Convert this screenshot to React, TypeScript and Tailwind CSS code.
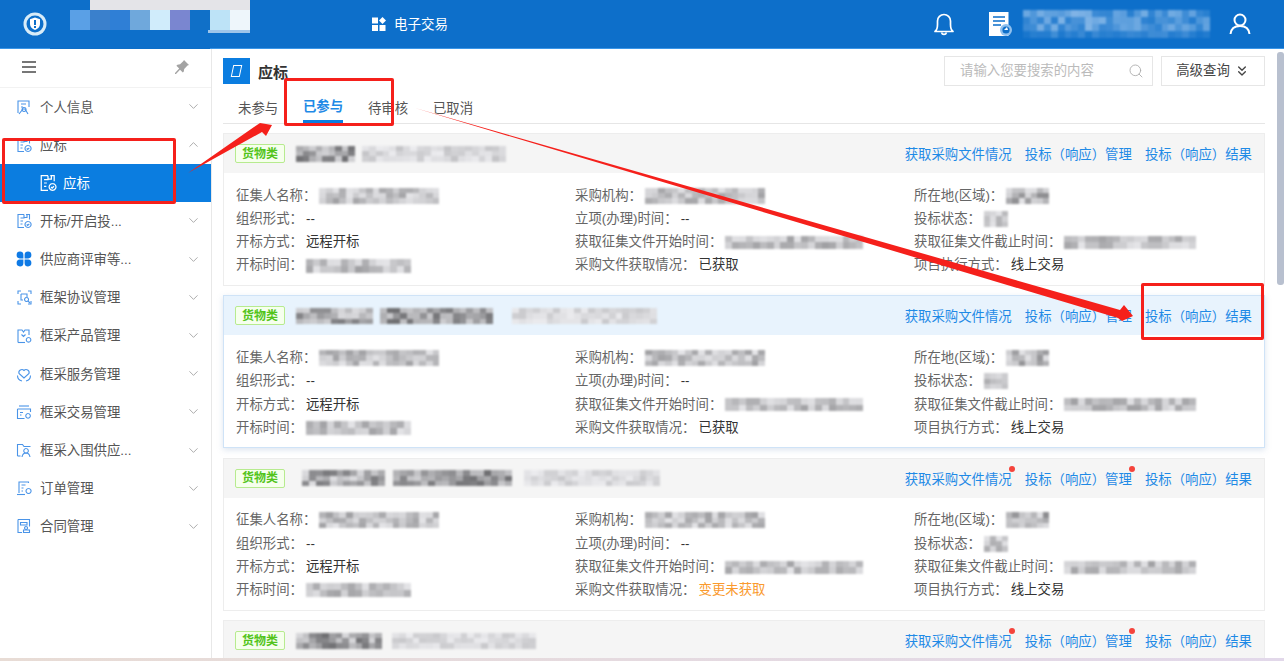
import { ChevronDown, ChevronUp, ChevronsDown, Search } from 'lucide-react';

const FONT = "font-['Liberation_Sans','Noto_Sans_CJK_SC',sans-serif]";

// stand-in for the pixelated, censored bits of the screenshot
const Mosaic = ({ w, h = 16, seed = 1, dark = 160, light = 228, cell = 7 }: { w: number; h?: number; seed?: number; dark?: number; light?: number; cell?: number }) => {
  const cols = Math.ceil(w / cell);
  const rows = Math.ceil(h / cell);
  const cells = [];
  for (let i = 0; i < cols * rows; i++) {
    const r = Math.abs(Math.sin((i + 1) * 12.9898 + seed * 78.233) * 43758.5453) % 1;
    const v = Math.round(light - (light - dark) * r);
    cells.push(<div key={i} style={{ backgroundColor: `rgb(${v},${v},${v + 3})` }} />);
  }
  return (
    <div
      className="grid shrink-0 overflow-hidden blur-[1px]"
      style={{ width: w, height: h, gridTemplateColumns: `repeat(${cols}, 1fr)`, gridTemplateRows: `repeat(${rows}, 1fr)` }}
    >
      {cells}
    </div>
  );
};

const HeaderMosaic = () => {
  const cols = 27;
  const cells = [];
  for (let i = 0; i < cols * 4; i++) {
    const r = Math.abs(Math.sin((i + 3) * 9.13) * 9999.77) % 1;
    const fade = i >= cols * 3 ? 0.45 : 1;
    cells.push(<div key={i} style={{ backgroundColor: `rgba(170,205,240,${(0.15 + r * 0.6) * fade})` }} />);
  }
  return (
    <div className="grid h-[28px] w-[187px] blur-[0.8px]" style={{ gridTemplateColumns: `repeat(${cols}, 1fr)`, gridTemplateRows: 'repeat(4, 1fr)' }}>
      {cells}
    </div>
  );
};

const iconPaths: Record<string, string[]> = {
  person: ['M2 14V2h11v6', 'M5 5h5M5 8h2', 'M3 15l4-5 2-0 3 5', 'M8 8.5a2 2 0 1 0 .1 0'],
  doc: ['M8 1.5H2v13h6', 'M10 1.5h3.5v5', 'M4.5 5h4M4.5 8h2.5M4.5 11h2', 'M8 1.5v3h3v-3', 'M12 8.5a3 3 0 1 0 .1 0', 'M10.7 11.5l1 1 1.6-1.6'],
  frame: ['M2 5V2h3M12 2h3v3M15 12v3h-3M5 15H2v-3', 'M5 5h6v3', 'M5 5v6h2', 'M10.5 8.5a2 2 0 1 0 .1 0', 'M12 12l2 2'],
  product: ['M2 14.5V2h4l1.5 2L9 2h4v5', 'M2 14.5h7', 'M5.5 6.5l2 2 2-2', 'M12.5 9.5a2.3 2.3 0 1 0 .1 0'],
  heart: ['M8 12L3 7.5a3 3 0 0 1 5-3 3 3 0 0 1 5 3z', 'M1.5 9.5c0 3 2 5 4.5 5.5', 'M14.5 9.5c0 3-2 5-4.5 5.5'],
  trade: ['M3 2h10', 'M1.5 5h13v3', 'M1.5 5v9.5h7', 'M4 8.5h3M4 11h1.5', 'M12 9.5a2.3 2.3 0 1 0 .1 0'],
  folder: ['M1.5 14V2.5h5l1.5 2h6.5', 'M1.5 14h3', 'M10 6.5a2.3 2.3 0 1 0 .1 0', 'M6 15c.5-3 2-4 4-4s3.500 1 4 4'],
  order: ['M3 13V2h9.500v1', 'M1 14.500h8', 'M5.500 5h4M5.500 8h2M5.500 11h1.500', 'M12.500 8.500a2.500 2.500 0 1 0 .1 0'],
  contract: ['M2 1.500h11.500v7', 'M2 1.500v13h4', 'M4.500 4.500h6.500v2.500h-6.500z', 'M10 8.500a1.500 1.500 0 1 0 .1 0', 'M7.500 14.500v-2.500h6v2.500z'],
};

const NavIcon = ({ name, size = 16, color = '#4a94e8' }: { name: string; size?: number; color?: string }) => {
  if (name === 'clover') {
    return (
      <svg width={size} height={size} viewBox="0 0 16 16" fill="#0f7ae5" className="shrink-0">
        <path d="M7.400 7.400H3.800a3.400 3.400 0 1 1 3.600-3.600zM8.600 7.400V3.800a3.400 3.400 0 1 1 3.600 3.600zM7.400 8.600v3.600a3.400 3.400 0 1 1-3.600-3.600zM8.600 8.600h3.600a3.400 3.400 0 1 1-3.600 3.600z" />
      </svg>
    );
  }
  return (
    <svg width={size} height={size} viewBox="0 0 16 16" fill="none" stroke={color} strokeWidth="1.100" className="shrink-0">
      {iconPaths[name].map((d) => (
        <path key={d} d={d} />
      ))}
    </svg>
  );
};

const navItems = [
  { icon: 'person', label: '个人信息' },
  { icon: 'doc', label: '应标', open: true },
  { icon: 'doc', label: '开标/开启投...' },
  { icon: 'clover', label: '供应商评审等...' },
  { icon: 'frame', label: '框架协议管理' },
  { icon: 'product', label: '框采产品管理' },
  { icon: 'heart', label: '框采服务管理' },
  { icon: 'trade', label: '框采交易管理' },
  { icon: 'folder', label: '框采入围供应...' },
  { icon: 'order', label: '订单管理' },
  { icon: 'contract', label: '合同管理' },
];

const Sidebar = () => (
  <aside className="w-[212px] shrink-0 border-r border-[#e8e8e8] bg-white text-[13.4px] text-[#555]">
    <div className="flex h-[38.500px] items-center justify-between border-b border-[#f2f2f2] pb-[1px] pl-[22px] pr-[21px]">
      <svg width="14" height="12" viewBox="0 0 14 12" fill="#777">
        <rect y="0" width="14" height="2" />
        <rect y="5" width="14" height="2" />
        <rect y="10" width="14" height="2" />
      </svg>
      <svg width="16" height="16" viewBox="0 0 16 16" fill="#a3a3a3">
        <path d="M10 1l5 5-1.500.6-3.300 3.300-.4 2.700-1 1-2.800-2.800L2 15l-1 0 0-1 4.200-4.500L2.400 6.700l1-1 2.700-.4 3.300-3.300z" />
      </svg>
    </div>
    {navItems.map((item) => (
      <div key={item.label}>
        <div className="flex h-[38.200px] items-center pl-[16px] pr-[10px]">
          <NavIcon name={item.icon} />
          <span className="ml-[8px] flex-1 pt-[2px]">{item.label}</span>
          {item.open ? <ChevronUp size={15} color="#999" strokeWidth={1.300} /> : <ChevronDown size={15} color="#999" strokeWidth={1.300} />}
        </div>
        {item.open && (
          <div className="flex h-[38px] items-center bg-[#0b7de0] pl-[39px] text-white">
            <NavIcon name="doc" size={18} color="#fff" />
            <span className="ml-[6px] pt-[2px]">应标</span>
          </div>
        )}
      </div>
    ))}
  </aside>
);

type CardData = {
  title: { w: number; seed: number; dark: number; light: number; gap: number }[];
  status?: string;
  dots?: boolean;
  hot?: boolean;
  headOnly?: boolean;
};

const cards: CardData[] = [
  { title: [{ w: 59, seed: 3, dark: 110, light: 215, gap: 11 }, { w: 144, seed: 4, dark: 195, light: 235, gap: 7 }] },
  {
    hot: true,
    title: [
      { w: 77, seed: 5, dark: 125, light: 220, gap: 11 },
      { w: 113, seed: 6, dark: 110, light: 205, gap: 7 },
      { w: 145, seed: 7, dark: 200, light: 235, gap: 19 },
    ],
  },
  {
    dots: true,
    status: '变更未获取',
    title: [
      { w: 83, seed: 8, dark: 120, light: 220, gap: 17 },
      { w: 119, seed: 9, dark: 110, light: 205, gap: 8 },
      { w: 136, seed: 10, dark: 200, light: 235, gap: 12 },
    ],
  },
  {
    dots: true,
    headOnly: true,
    title: [{ w: 86, seed: 11, dark: 110, light: 215, gap: 11 }, { w: 144, seed: 12, dark: 200, light: 235, gap: 10 }],
  },
];

const Row = ({ label, children }: { label: string; children: React.ReactNode }) => (
  <div className="flex h-[23.300px] items-center text-[#666]">
    <span className="shrink-0">{label}</span>
    <div className="ml-[3px] flex items-center text-[#333]">{children}</div>
  </div>
);

const Link = ({ text, dot }: { text: string; dot?: boolean }) => (
  <span className="relative text-[#1f8ae6]">
    {text}
    {dot && <i className="absolute right-[-3px] top-[-4px] h-[6px] w-[6px] rounded-full bg-[#f5443c]" />}
  </span>
);

const Card = ({ data, seed }: { data: CardData; seed: number }) => (
  <div className={`mb-[9.400px] h-[153px] shrink-0 border bg-white ${data.hot ? 'border-[#cfe3f7] shadow-[0_2px_6px_rgba(120,150,190,0.25)]' : 'border-[#ededed]'}`}>
    <div className={`flex h-[39px] items-center pl-[11px] pr-[12px] ${data.hot ? 'bg-[#e8f3fd]' : 'bg-[#f5f5f5]'}`}>
      <span className="flex h-[19px] w-[50px] items-center justify-center rounded-[2px] border border-[#b7eb8f] bg-[#f6ffed] text-[12px] font-bold text-[#52c41a]">货物类</span>
      {data.title.map((t) => (
        <div key={t.seed} style={{ marginLeft: t.gap }}>
          <Mosaic w={t.w} h={16} seed={t.seed} dark={t.dark} light={t.light} />
        </div>
      ))}
      <div className="ml-auto flex gap-[13px] pt-[3px]">
        <Link text="获取采购文件情况" dot={data.dots} />
        <Link text="投标（响应）管理" dot={data.dots} />
        <Link text="投标（响应）结果" />
      </div>
    </div>
    {!data.headOnly && (
      <div className="grid grid-cols-[339px_339px_1fr] pl-[12px] pt-[11px]">
        <Row label="征集人名称："><Mosaic w={120} seed={seed + 20} /></Row>
        <Row label="采购机构："><Mosaic w={120} seed={seed + 21} /></Row>
        <Row label="所在地(区域)："><Mosaic w={43} seed={seed + 22} dark={140} /></Row>
        <Row label="组织形式：">--</Row>
        <Row label="立项(办理)时间：">--</Row>
        <Row label="投标状态："><Mosaic w={24} seed={seed + 23} dark={170} /></Row>
        <Row label="开标方式：">远程开标</Row>
        <Row label="获取征集文件开始时间："><Mosaic w={138} h={13} seed={seed + 24} /></Row>
        <Row label="获取征集文件截止时间："><Mosaic w={132} h={13} seed={seed + 25} /></Row>
        <Row label="开标时间："><Mosaic w={105} h={14} seed={seed + 26} /></Row>
        <Row label="采购文件获取情况：">
          <span className={data.status ? 'text-[#fa9a2e]' : ''}>{data.status ?? '已获取'}</span>
        </Row>
        <Row label="项目执行方式：">
          <span>线上交易</span>
        </Row>
      </div>
    )}
  </div>
);

const Header = () => (
  <header className="relative flex h-[49px] shrink-0 items-center border-b border-[#3a96e8] bg-[#0d6fca] text-[13.500px] text-white">
    <svg width="24" height="24" viewBox="0 0 24 24" className="ml-[23px] shrink-0">
      <circle cx="12" cy="12" r="11.500" fill="#d8ecf8" />
      <circle cx="12" cy="12" r="8.500" fill="#0d6fca" />
      <path d="M12 5.500l5 1.800v4.700c0 3-2.200 5-5 6-2.800-1-5-3-5-6V7.300z" fill="#fff" />
      <path d="M11 8h2v5h-2zM11 14h2v2h-2z" fill="#0d6fca" />
    </svg>
    <div className="ml-[23px] mb-[8px] flex h-[20px] shrink-0">
      {['#5aa0e6', '#3a80cc', '#2f7fd6', '#6fa8dc', '#d0ecfb', '#7a86d0', '#1070c8', '#bde3f7', '#eef6fb'].map((c) => (
        <div key={c} className="h-full w-[20px]" style={{ backgroundColor: c }} />
      ))}
    </div>
    <svg width="14" height="14" viewBox="0 0 14 14" fill="#fff" className="ml-[122px] shrink-0">
      <rect x="0" y="0.500" width="6" height="6" />
      <path d="M10.500 0l3.500 3.500-3.500 3.500L7 3.500z" />
      <rect x="0" y="8" width="6" height="6" />
      <rect x="7.500" y="8" width="6" height="6" />
    </svg>
    <span className="ml-[8px] pt-[2px]">电子交易</span>
    <div className="ml-auto mr-[33px] flex items-center">
      <svg width="24" height="26" viewBox="0 0 24 26" fill="none" stroke="#fff" strokeWidth="1.700">
        <path d="M3 20.500c2-1.500 2.500-3.500 2.500-7V10a6.500 6.500 0 0 1 13 0v3.500c0 3.500.5 5.500 2.500 7z" strokeLinejoin="round" />
        <path d="M9.500 21.500a2.600 2.600 0 0 0 5 0" />
      </svg>
      <svg width="23" height="24" viewBox="0 0 23 24" className="ml-[33px]">
        <path d="M0 0h19.500v24H0z" fill="#fff" />
        <path d="M4 5h12M4 9h12M4 13h8" stroke="#0d6fca" strokeWidth="1.300" />
        <circle cx="17" cy="18" r="6" fill="#8fc0ee" />
        <circle cx="17" cy="18" r="3.600" fill="#0d6fca" />
        <path d="M15 18l3-3 1 3z" fill="#fff" />
      </svg>
      <div className="ml-[11px]">
        <HeaderMosaic />
      </div>
      <svg width="22" height="22" viewBox="0 0 22 22" fill="none" stroke="#fff" strokeWidth="2" className="ml-[19px]">
        <circle cx="11" cy="7" r="5.500" />
        <path d="M1.500 21c.5-5 4-8 9.500-8s9 3 9.500 8" />
      </svg>
    </div>
    <div className="absolute left-[90px] top-0 h-[10px] w-[160px] bg-[#e4e4e8]" />
    <div className="absolute left-[208px] top-[30px] h-[3px] w-[42px] bg-white/60 blur-[0.5px]" />
    <div className="absolute bottom-[-1px] left-[50px] h-[2px] w-[160px] bg-[#0d6fca]" />
  </header>
);

const Annotations = () => (
  <>
    <div className="absolute left-[2px] top-[138px] h-[66px] w-[174px] rounded-[2px] border-[3px] border-[#f5201b]" />
    <div className="absolute left-[284px] top-[78px] h-[48px] w-[110px] rounded-[2px] border-[3px] border-[#f5201b]" />
    <div className="absolute left-[1141px] top-[283px] h-[57px] w-[123px] rounded-[2px] border-[3px] border-[#f5201b]" />
    <svg width="1284" height="661" className="pointer-events-none absolute left-0 top-0">
      <polygon points="188,173 254,127 260,123 272,125 266,136 262,132" fill="#f5201b" />
      <polygon points="415,108 1120,310 1124,305 1133,316 1122,321 1118,318" fill="#f5201b" />
    </svg>
  </>
);

export default function App() {
  return (
    <div className={`relative flex h-[661px] w-[1284px] flex-col overflow-hidden bg-white ${FONT}`}>
      <Header />
      <div className="flex min-h-0 flex-1">
        <Sidebar />
        <main className="flex min-w-0 flex-1 flex-col pl-[11px] pr-[12px] text-[13.400px]">
          <div className="flex shrink-0 items-center pt-[7px]">
            <div className="flex h-[26px] w-[27px] items-center justify-center bg-[#0b7de0]">
              <div className="h-[12px] w-[9px] -skew-x-12 border-[1.500px] border-white" />
            </div>
            <span className="ml-[8px] pt-[5px] text-[15px] font-bold text-[#333]">应标</span>
            <div className="ml-auto flex h-[30px] w-[209px] items-center justify-between border border-[#e6e6e6] pl-[15px] pr-[8px] text-[#bbb]">
              <span className="pt-[1px]">请输入您要搜索的内容</span>
              <Search size={16} color="#aaa" strokeWidth={1.300} />
            </div>
            <div className="ml-[8px] flex h-[30px] w-[104px] items-center justify-center gap-[4px] border border-[#e6e6e6] text-[#444]">
              <span className="pt-[1px]">高级查询</span>
              <ChevronsDown size={16} color="#444" strokeWidth={2} />
            </div>
          </div>
          <div className="flex h-[38px] shrink-0 gap-[24.800px] border-b border-[#e6e6e6] pl-[15px]">
            {['未参与', '已参与', '待审核', '已取消'].map((t) => (
              <div
                key={t}
                className={`flex h-[37px] items-center pt-[9px] ${t === '已参与' ? 'border-b-[3px] border-[#0b7de0] font-bold text-[#1f8ae6]' : 'text-[#555]'}`}
              >
                {t}
              </div>
            ))}
          </div>
          <div className="mt-[9px] flex flex-col">
            {cards.map((c, i) => (
              <Card key={i} data={c} seed={i * 10} />
            ))}
          </div>
        </main>
        <div className="w-[7px] shrink-0 pt-[3px]">
          <div className="h-[233px] rounded-[3px] bg-[#b8c0cf]" />
        </div>
      </div>
      <Annotations />
      <div className="absolute bottom-0 left-0 h-[3px] w-full bg-gradient-to-r from-[#e8dcd5] to-[#e2d8ea]" />
    </div>
  );
}
